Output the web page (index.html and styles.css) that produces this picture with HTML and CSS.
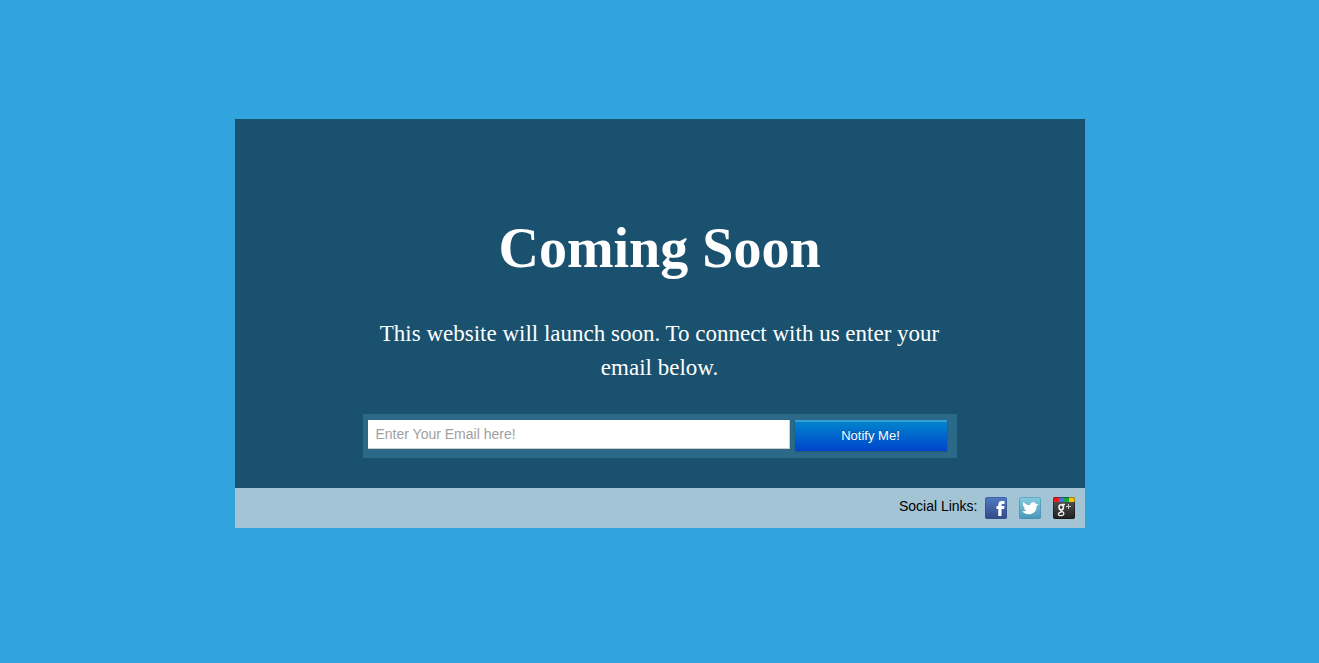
FILE: index.html
```html
<!DOCTYPE html>
<html lang="en">
<head>
<meta charset="utf-8">
<meta name="viewport" content="width=device-width, initial-scale=1">
<title>Coming Soon</title>
<link rel="stylesheet" href="styles.css">
</head>
<body>
<div class="card">
  <main class="content">
    <h1 class="title">Coming Soon</h1>
    <p class="lead">This website will launch soon. To connect with us enter your email below.</p>
    <form class="signup">
      <input class="email" type="email" placeholder="Enter Your Email here!" aria-label="Email">
      <button class="notify" type="submit">Notify Me!</button>
    </form>
  </main>
  <footer class="social">
    <span class="social-label">Social Links:</span>
    <a class="social-link" href="#" aria-label="Facebook">
      <svg width="24" height="24" viewBox="0 0 24 24" aria-hidden="true">
        <defs><linearGradient id="fb" x1="0" y1="0" x2="0" y2="1"><stop offset="0" stop-color="#527bc3"/><stop offset="1" stop-color="#314a85"/></linearGradient></defs>
        <rect x="1" y="1" width="22" height="22" rx="2" fill="url(#fb)"/>
        <rect x="1.500" y="1.500" width="21" height="21" rx="2" fill="none" stroke="#34508e" stroke-opacity=".6"/>
        <path d="M14.300 20v-7H12.500v-3h1.800V8.700C14.300 6 15.700 5 18.200 5H20.500v3h-1.700c-1 0-1.300.4-1.300 1.300V10h3l-.4 3h-2.600v7z" fill="#fff"/>
      </svg>
    </a>
    <a class="social-link" href="#" aria-label="Twitter">
      <svg width="24" height="24" viewBox="0 0 24 24" aria-hidden="true">
        <defs><linearGradient id="tw" x1="0" y1="0" x2="0" y2="1"><stop offset="0" stop-color="#86cde0"/><stop offset="1" stop-color="#4795b9"/></linearGradient></defs>
        <rect x="1" y="1" width="22" height="22" rx="2" fill="url(#tw)"/>
        <rect x="1.500" y="1.500" width="21" height="21" rx="2" fill="none" stroke="#4a8fae" stroke-opacity=".6"/>
        <path d="M5.300 6c1.800 1.800 3.700 2.800 6.200 3.600C12 7.300 13.500 6 15.500 6.200c1.200.1 2 .8 2.600 1.700l2.400.3-1.900 1.700c.2 4.900-3.100 8.400-7.600 8.400-2.800 0-5.300-1.100-7-3.300 1.800.5 3.400.3 4.600-.5-1.400-.3-2.300-1-2.800-2h1.400C5.500 11.500 4.600 9 5.300 6z" fill="#fff"/>
      </svg>
    </a>
    <a class="social-link" href="#" aria-label="Google Plus">
      <svg width="24" height="24" viewBox="0 0 24 24" aria-hidden="true">
        <defs>
          <linearGradient id="gp" x1="0" y1="0" x2="0" y2="1"><stop offset="0" stop-color="#595959"/><stop offset="1" stop-color="#202020"/></linearGradient>
          <clipPath id="gc"><rect x="1" y="1" width="22" height="22" rx="2"/></clipPath>
        </defs>
        <g clip-path="url(#gc)">
          <path d="M1 1h22v22H1z" fill="url(#gp)"/>
          <path d="M1 1h6v5H1z" fill="#ee1c1c"/>
          <path d="M7 1h5v5H7z" fill="#3f72d8"/>
          <path d="M12 1h5v5h-5z" fill="#14a53a"/>
          <path d="M17 1h6v5h-6z" fill="#f3c414"/>
        </g>
        <rect x="1.500" y="1.500" width="21" height="21" rx="2" fill="none" stroke="#000" stroke-opacity=".35"/>
        <g fill="none" stroke="#f2f2f2">
          <ellipse cx="9.200" cy="11.300" rx="2.200" ry="2.500" stroke-width="1.600"/>
          <path d="M9.500 8.500H13M9.500 13.700c-1.500 1-.5 1.400.8 2 2.400 1.100 1.900 3.900-1.200 4-3.500.1-3.800-3.100.6-3.900" stroke-width="1.300"/>
          <path d="M14 10.500h5M16.500 8v5" stroke-width="1" stroke="#ccc"/>
        </g>
      </svg>
    </a>
  </footer>
</div>
</body>
</html>
```
FILE: styles.css
```css
* {
  box-sizing: border-box;
}

body {
  margin: 0;
  padding: 119px 16px 32px;
  background: #31a3dd;
  font-family: "Liberation Sans", Arial, sans-serif;
}

.card {
  max-width: 850px;
  margin: 0 auto;
}

.content {
  display: flex;
  flex-direction: column;
  align-items: center;
  padding: 97px 16px 30px;
  background: #19516e;
}

.title {
  margin: 0;
  color: #fff;
  font: bold 56px/64px "Liberation Serif", "Times New Roman", serif;
  text-align: center;
}

.lead {
  max-width: 594px;
  margin: 37px 0 29px;
  color: #fff;
  font: 23px/34px "Liberation Serif", "Times New Roman", serif;
  text-align: center;
}

.signup {
  display: flex;
  gap: 5px;
  width: 100%;
  max-width: 594px;
  padding: 6px 10px 7px 5px;
  background: #2a6a88;
}

.email {
  flex: 1;
  min-width: 0;
  height: 29px;
  padding: 0 8px;
  border: 0;
  border-right: 1px solid #ccc;
  border-bottom: 1px solid #ccc;
  background: #fff;
  color: #333;
  font: 14px "Liberation Sans", Arial, sans-serif;
}

.email::placeholder {
  color: #a0a0a0;
}

.notify {
  width: 152px;
  height: 31px;
  padding: 0;
  border: 0;
  background: linear-gradient(#0088cc, #0044cc);
  box-shadow: inset 0 2px 0 rgba(255, 255, 255, 0.2), 0 1px 2px rgba(0, 0, 0, 0.2);
  color: #fff;
  font: 13px "Liberation Sans", Arial, sans-serif;
  text-shadow: 0 -1px 0 rgba(0, 0, 0, 0.25);
}

.social {
  display: flex;
  justify-content: flex-end;
  align-items: center;
  gap: 10px;
  height: 40px;
  padding: 0 9px;
  background: #a3c4d5;
}

.social-label {
  margin-right: -4px;
  padding-bottom: 4px;
  color: #000;
  font-size: 14px;
}

.social-link svg {
  display: block;
}
```
